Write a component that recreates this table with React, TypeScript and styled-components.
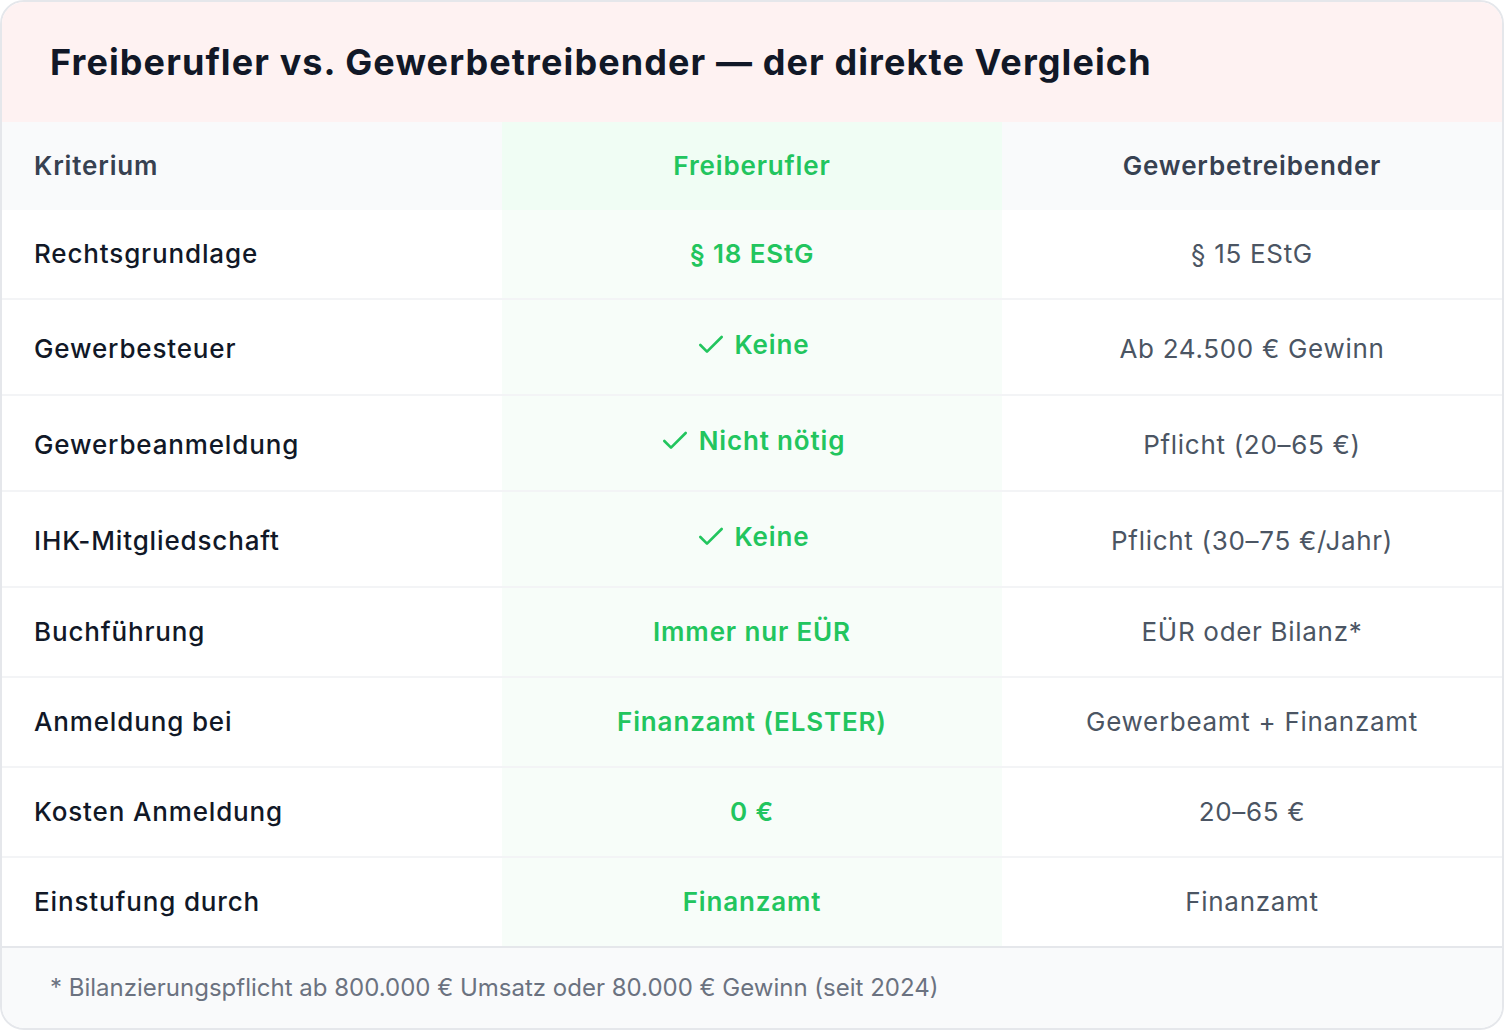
import React from "react";
import styled, { createGlobalStyle } from "styled-components";
import { Check } from "lucide-react";

const Global = createGlobalStyle`
  html, body { margin: 0; padding: 0; background: #ffffff; }
  body { font-family: Inter, "Noto Sans", "Liberation Sans", sans-serif; -webkit-font-smoothing: antialiased; }
  * { box-sizing: border-box; }
`;

const Card = styled.div`
  width: 1504px;
  height: 1030px;
  border: 2px solid #e5e7eb;
  border-radius: 24px;
  overflow: hidden;
  background: #ffffff;
  display: flex;
  flex-direction: column;
`;

const Header = styled.div`
  background: #fef2f2;
  padding: 40px 48px;
`;

const Title = styled.h2`
  margin: 0;
  font-size: 36px;
  line-height: 40px;
  font-weight: 700;
  color: #111827;
  letter-spacing: 1.1px;
`;

const Table = styled.div`
  display: flex;
  flex-direction: column;
  flex: 1;
`;

const Row = styled.div<{ $head?: boolean; $tall?: boolean; $last?: boolean }>`
  display: grid;
  grid-template-columns: 500px 500px 500px;
  min-height: ${(p) => (p.$head ? "88px" : p.$tall ? "96px" : p.$last ? "88px" : "90px")};
  background: ${(p) => (p.$head ? "#f9fafb" : "#ffffff")};
  border-bottom: ${(p) => (p.$head ? "none" : p.$last ? "none" : "2px solid #f3f4f6")};
`;

const Cell = styled.div<{
  $align?: "left" | "center";
  $green?: boolean;
  $head?: boolean;
  $lift?: boolean;
  $drop?: boolean;
}>`
  display: flex;
  align-items: center;
  justify-content: ${(p) => (p.$align === "center" ? "center" : "flex-start")};
  padding: ${(p) => (p.$lift ? "0 32px 4px" : p.$drop ? "3px 32px 0" : "0 32px")};
  background: ${(p) => (p.$green ? (p.$head ? "#f0fdf4" : "#f7fdf9") : "transparent")};
  font-size: 26px;
  line-height: 40px;
  letter-spacing: 0.85px;
`;

const HeadText = styled.span<{ $green?: boolean }>`
  font-weight: 600;
  color: ${(p) => (p.$green ? "#22c55e" : "#374151")};
`;

const Label = styled.span`
  font-weight: 500;
  color: #111827;
`;

const GreenValue = styled.span`
  display: inline-flex;
  align-items: center;
  gap: 8px;
  font-weight: 600;
  color: #22c55e;
`;

const GrayValue = styled.span`
  font-weight: 400;
  color: #4b5563;
  letter-spacing: 0.7px;
`;

const Footer = styled.div`
  background: #f9fafb;
  border-top: 2px solid #e5e7eb;
  padding: 24px 48px;
  font-size: 24px;
  line-height: 32px;
  color: #6b7280;
  height: 82px;
`;

type RowData = { label: string; fb: string; check?: boolean; gw: string };

const rows: RowData[] = [
  { label: "Rechtsgrundlage", fb: "§ 18 EStG", gw: "§ 15 EStG" },
  { label: "Gewerbesteuer", fb: "Keine", check: true, gw: "Ab 24.500 € Gewinn" },
  { label: "Gewerbeanmeldung", fb: "Nicht nötig", check: true, gw: "Pflicht (20–65 €)" },
  { label: "IHK-Mitgliedschaft", fb: "Keine", check: true, gw: "Pflicht (30–75 €/Jahr)" },
  { label: "Buchführung", fb: "Immer nur EÜR", gw: "EÜR oder Bilanz*" },
  { label: "Anmeldung bei", fb: "Finanzamt (ELSTER)", gw: "Gewerbeamt + Finanzamt" },
  { label: "Kosten Anmeldung", fb: "0 €", gw: "20–65 €" },
  { label: "Einstufung durch", fb: "Finanzamt", gw: "Finanzamt" },
];

export default function App() {
  return (
    <>
      <Global />
      <Card>
        <Header>
          <Title>Freiberufler vs. Gewerbetreibender — der direkte Vergleich</Title>
        </Header>
        <Table>
          <Row $head>
            <Cell>
              <HeadText>Kriterium</HeadText>
            </Cell>
            <Cell $align="center" $green $head>
              <HeadText $green>Freiberufler</HeadText>
            </Cell>
            <Cell $align="center">
              <HeadText>Gewerbetreibender</HeadText>
            </Cell>
          </Row>
          {rows.map((r, i) => (
            <Row key={r.label} $tall={r.check} $last={i === rows.length - 1}>
              <Cell $drop={r.check}>
                <Label>{r.label}</Label>
              </Cell>
              <Cell $align="center" $green $lift={r.check}>
                <GreenValue>
                  {r.check && <Check size={32} strokeWidth={2} />}
                  {r.fb}
                </GreenValue>
              </Cell>
              <Cell $align="center" $drop={r.check}>
                <GrayValue>{r.gw}</GrayValue>
              </Cell>
            </Row>
          ))}
        </Table>
        <Footer>* Bilanzierungspflicht ab 800.000 € Umsatz oder 80.000 € Gewinn (seit 2024)</Footer>
      </Card>
    </>
  );
}
